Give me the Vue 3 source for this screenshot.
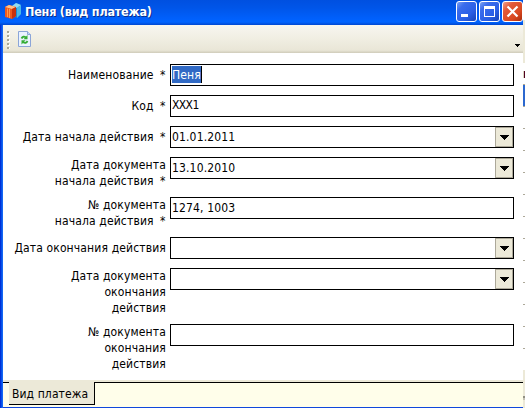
<script setup>
const rows = [
  { lines: ['Наименование'], required: true, value: 'Пеня', kind: 'selected', h: 31 },
  { lines: ['Код'], required: true, value: 'XXX1', kind: 'code', h: 31 },
  { lines: ['Дата начала действия'], required: true, value: '01.01.2011', combo: true, h: 31 },
  { lines: ['Дата документа', 'начала действия'], required: true, value: '13.10.2010', combo: true, h: 40 },
  { lines: ['№ документа', 'начала действия'], required: true, value: '1274, 1003', h: 40 },
  { lines: ['Дата окончания действия'], value: '', combo: true, h: 31 },
  { lines: ['Дата документа', 'окончания', 'действия'], value: '', combo: true, h: 56 },
  { lines: ['№ документа', 'окончания', 'действия'], value: '', h: 56 },
]
const ticks = [128, 150, 172, 194, 216, 238, 260, 282, 304, 326, 348]
</script>

<template>
  <div class="screen">
    <div class="window">
      <header class="titlebar">
        <svg class="app-icon" width="16" height="17" viewBox="0 0 16 17">
          <path d="M7 3L11 0L16 2V11L12 15L8 13Z" fill="#1e86cf" />
          <path d="M7 3L11 0L16 2L12 5Z" fill="#8fdcf5" />
          <path d="M12 5L16 2V11L12 15Z" fill="#48b9e8" />
          <path d="M0 4L4 2L11 4V13L7 16L0 14Z" fill="#ee5a1c" />
          <path d="M0 4L4 2L11 4L7 6Z" fill="#ffc08a" />
          <path d="M7 6L11 4V13L7 16Z" fill="#c8320c" />
          <path d="M2.500 5.500V14M4.500 6V15" stroke="#ff9a4c" />
        </svg>
        <h1 class="title">Пеня (вид платежа)</h1>
        <div class="buttons">
          <button class="wbtn"><svg width="21" height="21"><rect x="5" y="13" width="7" height="3" fill="#fff" /></svg></button>
          <button class="wbtn"><svg width="21" height="21"><path d="M5 5H16V16H5ZM6 8V15H15V8Z" fill="#fff" fill-rule="evenodd" /></svg></button>
          <button class="wbtn close"><svg width="21" height="21"><path d="M5.500 5.500L15.500 15.500M15.500 5.500L5.500 15.500" stroke="#fff" stroke-width="2.200" /></svg></button>
        </div>
      </header>
      <div class="body">
        <div class="toolbar">
          <svg class="grip" width="3" height="18"><g fill="#fff"><rect v-for="i in 5" :key="i" x="1" :y="i * 4 - 3" width="2" height="2" /></g><g fill="#a9a796"><rect v-for="i in 5" :key="i" x="0" :y="i * 4 - 4" width="2" height="2" /></g></svg>
          <svg class="refresh" width="13" height="16" viewBox="0 0 13 16">
            <path d="M.5.5H9.500L12.500 3.500V15.500H.5Z" fill="#eaf3ff" stroke="#8ba5d8" />
            <path d="M9.500.5V3.500H12.500" fill="#c4d6f4" stroke="#8ba5d8" />
            <path d="M3.500 7.500Q5 4.500 8 6.500" fill="none" stroke="#35ad35" stroke-width="1.800" />
            <path d="M9.500 4V8.300H5.500Z" fill="#35ad35" />
            <path d="M9.500 10Q8 13 5 11" fill="none" stroke="#35ad35" stroke-width="1.800" />
            <path d="M3.500 13.500V9.300H7.500Z" fill="#35ad35" />
          </svg>
          <svg class="more" width="5" height="3"><path d="M0 0H5V1H4V2H3V3H2V2H1V1H0Z" /></svg>
        </div>
        <form class="form">
          <div v-for="(r, i) in rows" :key="i" class="row" :style="{ height: r.h + 'px' }">
            <label :class="['label', { single: r.lines.length === 1 }]">
              <span v-for="(l, n) in r.lines" :key="l">{{ l }}<span v-if="r.required && n === r.lines.length - 1" class="star"> *</span></span>
            </label>
            <div class="field">
              <span :class="['value', r.kind]">{{ r.value }}</span>
              <span v-if="r.combo" class="drop"><svg width="9" height="5"><path d="M0 0H9V1H8V2H7V3H6V4H5V5H4V4H3V3H2V2H1V1H0Z" /></svg></span>
            </div>
          </div>
        </form>
        <footer class="tabs"><div class="tab"><span>Вид платежа</span></div></footer>
      </div>
    </div>
    <svg class="edge" width="2" height="408">
      <rect width="2" height="408" fill="#fff" />
      <rect y="20" width="2" height="43" fill="#ece9d8" />
      <rect y="71" width="2" height="7" fill="#d8d4c0" />
      <rect x="1" y="71" width="1" height="7" fill="#500020" />
      <rect y="84" width="2" height="23" fill="#2c68cf" />
      <rect y="84" width="2" height="1" fill="#b0a98f" />
      <rect y="106" width="2" height="1" fill="#b0a98f" />
      <rect v-for="t in ticks" :key="t" :y="t" width="2" height="1" fill="#aca899" />
      <rect y="370" width="2" height="38" fill="#ece9d8" />
      <rect y="396" width="2" height="2" fill="#918f83" />
      <rect y="398" width="2" height="2" fill="#c5c2b4" />
    </svg>
  </div>
</template>

<style>
body { margin: 0; overflow: hidden; }
</style>

<style scoped>
* { box-sizing: border-box; }
.screen { display: flex; width: 525px; height: 408px; background: #fff; font: 12px/16px "DejaVu Sans Condensed", "DejaVu Sans", sans-serif; font-stretch: condensed; color: #000; }
.window { width: 523px; height: 408px; display: flex; flex-direction: column; }
.titlebar { height: 25px; display: flex; align-items: flex-start; padding-left: 5px; background: linear-gradient(#0050e0 0, #0055e8 30%, #0060fc 75%, #0064ff 88%, #0047d0 100%); }
.app-icon { margin-top: 3px; flex: none; }
.title { margin: 4px 0 0 4px; font-size: 12.5px; line-height: 16px; letter-spacing: -.22px; font-weight: bold; color: #fff; text-shadow: 1px 1px 0 #0a2f8c; white-space: nowrap; flex: 1; }
.buttons { display: flex; gap: 2px; padding-top: 1px; }
.wbtn { width: 21px; height: 21px; padding: 0; border: 1px solid #fff; border-radius: 3px; background: linear-gradient(135deg, #7da2f2 0, #3a6cec 25%, #2a5fe6 65%, #1743b8 100%); overflow: hidden; }
.wbtn svg { display: block; margin: -1px; }
.close { background: linear-gradient(135deg, #f0a088 0, #e2593a 28%, #d9481f 70%, #a82c0c 100%); }
.body { flex: 1; padding: 0 0 1px 3px; background: linear-gradient(90deg, #0030d8 0 1px, #0650e8 1px 2px, #1466f4 2px 3px, #1048dc 3px); display: flex; flex-direction: column; }
.toolbar { height: 28px; display: flex; align-items: flex-start; padding: 5px 3px 0 4px; background: linear-gradient(#f7f6f0 0, #f0eee2 50%, #e9e6d7 90%, #cfcbb9 100%); }
.grip { margin-top: 1px; }
.refresh { margin-left: 8px; margin-top: 1px; }
.more { margin: 14px 0 0 auto; }
.form { height: 327px; padding: 11px 9px 0 0; background: #fff; }
.row { display: flex; align-items: flex-start; }
.label { width: 163px; margin-right: 4px; display: flex; flex-direction: column; align-items: flex-end; white-space: nowrap; letter-spacing: .14px; }
.star { word-spacing: 2.5px; letter-spacing: .5px; white-space: pre; }
.single { padding-top: 3px; }
.field { flex: 1; height: 22px; border: 1px solid #000; display: flex; justify-content: space-between; align-items: flex-start; background: #fff; }
.value { margin-top: 3px; padding-left: 1px; line-height: 15px; height: 15px; white-space: pre; letter-spacing: .15px; }
.selected { margin: 1px 0 0 1px; padding: 2px 0 0; height: 17px; background: #316ac5; color: #fff; border-right: 1px solid #000; }
.code { margin-top: 2px; letter-spacing: -.6px; }
.drop { width: 18px; height: 20px; border: 1px solid #aca899; background: #ece9d8; display: flex; align-items: center; justify-content: center; }
.tabs { height: 27px; border-top: 2px solid #ece9d8; background: linear-gradient(#000 0 1px, #fffeea 1px); padding-left: 6px; }
.tab { width: 86px; height: 23px; background: #ece9d8; border-right: 1px solid #000; border-bottom: 1px solid #000; padding: 4px 0 0 3px; white-space: nowrap; letter-spacing: .1px; }
</style>
